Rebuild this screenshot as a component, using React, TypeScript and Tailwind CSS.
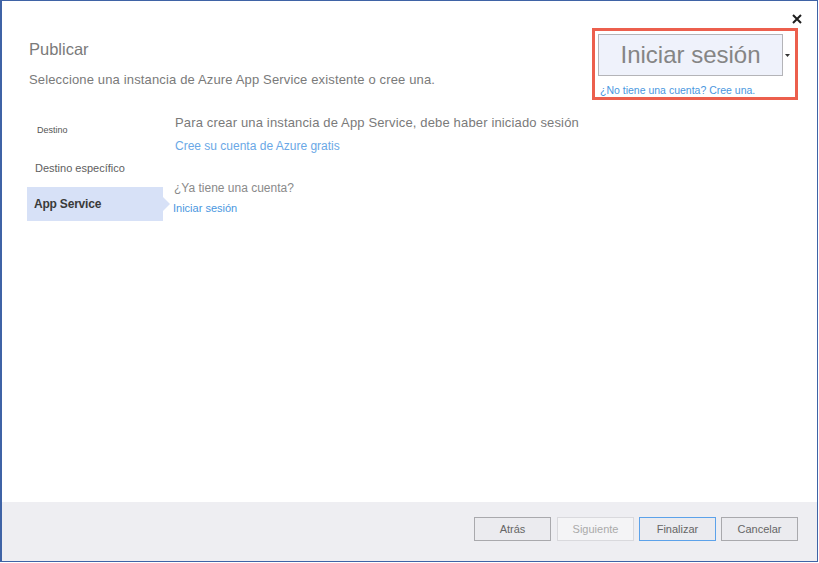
import React from "react";

export default function App() {
  const font = { fontFamily: '"Liberation Sans", Arial, sans-serif' };
  return (
    <div className="w-[819px] h-[563px] bg-white" style={font}>
      <div className="relative w-[818px] h-[562px] border border-l-2 border-[#3f63a6] flex flex-col bg-white">
        {/* close */}
        <div className="absolute right-[13px] top-[11px] w-[14px] h-[14px] flex items-center justify-center">
          <svg width="10" height="10" viewBox="0 0 10 10">
            <path d="M1 1 L9 9 M9 1 L1 9" stroke="#1e1e1e" strokeWidth="2" />
          </svg>
        </div>
        <div className="flex-1 flex flex-col">
          {/* header */}
          <div className="flex pt-[27px]">
            <div className="pl-[27px] flex flex-col">
              <div className="mt-[11px] text-[16.5px] leading-[20px] text-[#7a7a7a]">Publicar</div>
              <div className="mt-[13px] text-[13px] leading-[16px] text-[#7a7a7a] tracking-[0.15px]">
                Seleccione una instancia de Azure App Service existente o cree una.
              </div>
            </div>
            <div className="ml-auto mr-[19px] w-[206px] h-[72px] border-[3px] border-[#ec5f4d] p-[3px] flex flex-col">
              <div className="flex items-center">
                <div className="w-[185px] h-[42px] bg-[#eff2fb] border border-[#b4b4b8] flex items-center justify-center pb-[1px] text-[24px] text-[#858585]">
                  Iniciar sesión
                </div>
                <div className="flex-1 flex justify-center">
                  <svg width="5" height="3" viewBox="0 0 5 3">
                    <path d="M0 0 L5 0 L2.5 3 Z" fill="#333" />
                  </svg>
                </div>
              </div>
              <div className="mt-[8px] ml-[2px] text-[10.5px] leading-[12px] text-[#4a97e0]">
                ¿No tiene una cuenta? Cree una.
              </div>
            </div>
          </div>
          {/* body */}
          <div className="flex">
            <div className="ml-[25px] w-[136px] pt-[12px] flex flex-col">
              <div className="h-[37px] flex items-center pl-[10px] text-[9px] text-[#555]">Destino</div>
              <div className="h-[38px] flex items-center pl-[8px] text-[11px] text-[#606060]">Destino específico</div>
              <div className="relative h-[34px] flex items-center pl-[7px] bg-[#d7e1f7] text-[12px] font-bold text-[#3a3a3a] tracking-[-0.2px]">
                App Service
                <div className="absolute right-[-7px] top-[10px] w-0 h-0 border-y-[7px] border-y-transparent border-l-[7px] border-l-[#d7e1f7]" />
              </div>
            </div>
            <div className="pl-[10px] pt-[14px] flex flex-col">
              <div className="pl-[2px] text-[13px] leading-[18px] text-[#7a7a7a] tracking-[0.15px]">
                Para crear una instancia de App Service, debe haber iniciado sesión
              </div>
              <div className="pl-[2px] mt-[6px] text-[12px] leading-[16px] text-[#6aa8e6]">
                Cree su cuenta de Azure gratis
              </div>
              <div className="pl-[1px] mt-[26px] text-[12px] leading-[16px] text-[#8a8a8a]">¿Ya tiene una cuenta?</div>
              <div className="mt-[5px] text-[11px] leading-[14px] text-[#4a97e0]">Iniciar sesión</div>
            </div>
          </div>
        </div>
        {/* footer */}
        <div className="h-[59px] bg-[#eeeef2] flex justify-end items-start pt-[15px] pr-[19px]">
          <button className="w-[77px] h-[24px] border border-[#a9a9ad] bg-[#ebebef] text-[11px] text-[#666]">Atrás</button>
          <button className="ml-[6px] w-[77px] h-[24px] border border-[#d9d9dd] bg-[#f4f4f6] text-[11px] text-[#aaa]">Siguiente</button>
          <button className="ml-[5px] w-[77px] h-[24px] border border-[#5ca2ea] bg-[#ebebef] text-[11px] text-[#666]">Finalizar</button>
          <button className="ml-[5px] w-[77px] h-[24px] border border-[#a9a9ad] bg-[#ebebef] text-[11px] text-[#666]">Cancelar</button>
        </div>
      </div>
    </div>
  );
}
